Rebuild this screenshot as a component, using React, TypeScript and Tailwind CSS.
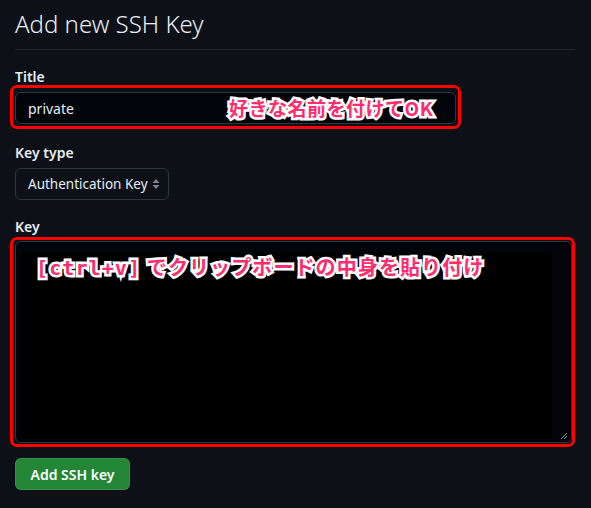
const note =
  "font-bold text-[#ff2d6f] [-webkit-text-stroke:5px_white] [paint-order:stroke_fill] whitespace-nowrap";

export default function App() {
  return (
    <div className="min-h-screen bg-[#0d1117] px-[15px] font-['Noto_Sans','Noto_Sans_CJK_JP',sans-serif] text-[#e6edf3]">
      {/* Header */}
      <h2 className="pt-[7px] pb-[9px] text-[24px] leading-[33px] font-light border-b border-[#21262d] w-[560px]">
        Add new SSH Key
      </h2>

      {/* Title */}
      <label className="block mt-[17px] text-[14px] leading-[19px] font-semibold">Title</label>
      <div className="relative -ml-[5px] w-[451px] border-[3px] border-[#ff0000] rounded-[7px] pt-[4px] pb-[2px] pl-[2px] pr-[2px] -mt-[1px]">
        <div className="h-[32px] rounded-[6px] border border-[#30363d] bg-[#010409] flex items-center px-[12px] text-[14px]">
          private
        </div>
        <span
          className={`absolute left-[216px] top-[7px] text-[19px] leading-[26px] tracking-[0.5px] font-['Noto_Sans_CJK_JP',sans-serif] ${note}`}
        >
          好きな名前を付けてOK
        </span>
      </div>

      {/* Key type */}
      <label className="block mt-[14px] text-[14px] leading-[19px] font-semibold">Key type</label>
      <div className="mt-[6px] w-[154px] h-[32px] rounded-[6px] border border-[#30363d] bg-[#0d1117] flex items-center pl-[12px] pr-[8px] text-[13.5px] whitespace-nowrap">
        <span className="flex-1">Authentication Key</span>
        <svg width="8" height="12" viewBox="0 0 8 12" className="shrink-0">
          <path d="M4 1L7.5 5H0.5Z M4 11L0.5 7H7.5Z" fill="#7d8590" />
        </svg>
      </div>

      {/* Key */}
      <label className="block mt-[17px] text-[14px] leading-[19px] font-semibold">Key</label>
      <div className="relative -ml-[5px] w-[565px] border-[3px] border-[#ff0000] rounded-[7px] pt-[1px] pb-[1px] pl-[2px] mt-[1px]">
        <div className="relative h-[202px] rounded-[6px] border border-[#30363d] bg-[#010409] pt-[11px] pl-[5px] pr-[19px] pb-[3px]">
          <div className="h-full bg-black" />
          <svg className="absolute right-[3px] bottom-[2px]" width="8" height="8" viewBox="0 0 8 8">
            <path d="M7 1L1 7M7 4L4 7" stroke="#8b949e" strokeWidth="1" />
          </svg>
        </div>
        <span className={`absolute left-[23px] top-[13px] text-[20px] leading-[28px] tracking-[1.1px] ${note}`}>
          <span className="font-['DejaVu_Sans_Mono',monospace]">[ctrl+v]</span>
          <span className="font-['Noto_Sans_CJK_JP',sans-serif]"> でクリップボードの中身を貼り付け</span>
        </span>
      </div>

      {/* Submit */}
      <button className="mt-[11px] h-[32px] w-[115px] rounded-[6px] bg-[#238636] border border-[rgba(240,246,252,0.1)] text-white text-[14px] font-semibold">
        Add SSH key
      </button>
    </div>
  );
}
